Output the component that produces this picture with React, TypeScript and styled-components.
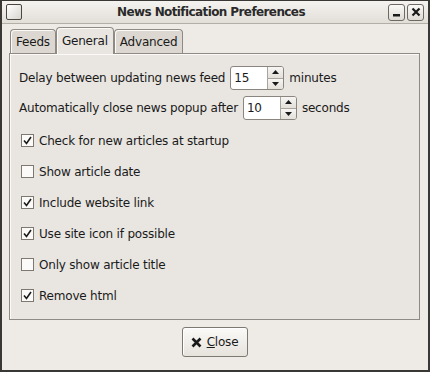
import React from 'react';
import styled, { createGlobalStyle } from 'styled-components';

const FONT = '"DejaVu Sans", "Liberation Sans", sans-serif';

const GlobalStyle = createGlobalStyle`
  html, body {
    margin: 0;
    padding: 0;
    background: #2b2b2b;
  }
  * {
    box-sizing: border-box;
  }
`;

const Window = styled.div`
  width: 430px;
  height: 372px;
  display: flex;
  flex-direction: column;
  background: #eeebe7;
  border: 2px solid #3a3835;
  border-top-width: 1px;
  font-family: ${FONT};
  font-size: 12px;
  letter-spacing: -0.2px;
  color: #1a1a1a;
`;

const TitleBar = styled.div`
  height: 23px;
  display: flex;
  align-items: center;
  padding: 0 4px 0 4px;
  background: linear-gradient(#f5f3f0, #e2ded8);
  border-bottom: 1px solid #b3aea6;
`;

const AppIcon = styled.div`
  width: 16px;
  height: 16px;
  border: 1px solid #4a4743;
  border-radius: 2px;
  background: linear-gradient(135deg, #ffffff, #d8d5d0);
`;

const Title = styled.div`
  flex: 1;
  text-align: center;
  font-weight: bold;
  font-size: 12px;
  letter-spacing: -0.6px;
  color: #2a2a2a;
  padding-left: 12px;
`;

const TitleButtons = styled.div`
  display: flex;
  gap: 2px;
`;

const TitleButton = styled.div`
  width: 17px;
  height: 17px;
  border: 1px solid #6d6963;
  border-radius: 3px;
  background: linear-gradient(#fbfaf8, #dedad4);
  display: flex;
  align-items: center;
  justify-content: center;
`;

const Body = styled.div`
  flex: 1;
  display: flex;
  flex-direction: column;
  padding: 4px 8px 0 7px;
`;

const Tabs = styled.div`
  display: flex;
  align-items: flex-end;
  height: 25px;
  padding-left: 1px;
`;

const Tab = styled.div<{ $active?: boolean }>`
  height: ${(p) => (p.$active ? '27px' : '24px')};
  padding: 0 5px;
  display: flex;
  align-items: center;
  border: 1px solid #8f8a83;
  border-bottom: none;
  border-radius: 4px 4px 0 0;
  background: ${(p) => (p.$active ? '#e9e6e1' : '#dcd8d1')};
  margin-bottom: ${(p) => (p.$active ? '-1px' : '0')};
  position: relative;
  z-index: ${(p) => (p.$active ? 1 : 0)};
  box-shadow: inset 1px 1px 0 #fbfaf8;
`;

const Panel = styled.div`
  height: 267px;
  display: flex;
  flex-direction: column;
  background: #e9e6e1;
  border: 1px solid #8f8a83;
  box-shadow: inset 1px 1px 0 #fbfaf8;
  padding: 12px 9px 0 9px;
`;

const SpinRow = styled.div`
  display: flex;
  align-items: center;
  height: 24px;
  gap: 5px;
  & + & {
    margin-top: 6px;
  }
`;

const SpinBox = styled.div<{ $width: number }>`
  width: ${(p) => p.$width}px;
  height: 24px;
  display: flex;
  border: 1px solid #8a857e;
  border-radius: 3px;
  background: #ffffff;
  overflow: hidden;
`;

const SpinValue = styled.div`
  flex: 1;
  display: flex;
  align-items: center;
  padding-left: 3px;
`;

const SpinArrows = styled.div`
  width: 16px;
  display: flex;
  flex-direction: column;
  border-left: 1px solid #a8a39b;
`;

const SpinArrow = styled.div`
  flex: 1;
  display: flex;
  align-items: center;
  justify-content: center;
  background: linear-gradient(#f7f6f4, #e3dfd9);
  & + & {
    border-top: 1px solid #a8a39b;
  }
`;

const CheckList = styled.div`
  display: flex;
  flex-direction: column;
  margin-top: 5px;
  padding-left: 2px;
`;

const CheckRow = styled.label`
  height: 31px;
  display: flex;
  align-items: center;
  gap: 5px;
`;

const Box = styled.span`
  width: 13px;
  height: 13px;
  border: 1px solid #7d7870;
  background: #fbfaf9;
  display: flex;
  align-items: center;
  justify-content: center;
`;

const ButtonRow = styled.div`
  display: flex;
  justify-content: center;
  padding-top: 7px;
`;

const Button = styled.div`
  width: 66px;
  height: 30px;
  display: flex;
  align-items: center;
  justify-content: center;
  gap: 5px;
  border: 1px solid #7d7870;
  border-radius: 3px;
  background: linear-gradient(#fbfaf8, #e6e2dc);
  box-shadow: inset 1px 1px 0 #ffffff;
`;

const Underline = styled.span`
  text-decoration: underline;
`;

const Spin = ({ value, width }: { value: string; width: number }) => (
  <SpinBox $width={width}>
    <SpinValue>{value}</SpinValue>
    <SpinArrows>
      <SpinArrow>
        <svg width="7" height="4" viewBox="0 0 7 4">
          <path d="M0 4 L3.5 0 L7 4 Z" fill="#1a1a1a" />
        </svg>
      </SpinArrow>
      <SpinArrow>
        <svg width="7" height="4" viewBox="0 0 7 4">
          <path d="M0 0 L3.5 4 L7 0 Z" fill="#1a1a1a" />
        </svg>
      </SpinArrow>
    </SpinArrows>
  </SpinBox>
);

const Check = ({ checked, label }: { checked?: boolean; label: string }) => (
  <CheckRow>
    <Box>
      {checked && (
        <svg width="9" height="9" viewBox="0 0 9 9">
          <path d="M1 4.5 L3.5 7.5 L8 1" stroke="#1a1a1a" strokeWidth="1.6" fill="none" />
        </svg>
      )}
    </Box>
    {label}
  </CheckRow>
);

const options = [
  { label: 'Check for new articles at startup', checked: true },
  { label: 'Show article date', checked: false },
  { label: 'Include website link', checked: true },
  { label: 'Use site icon if possible', checked: true },
  { label: 'Only show article title', checked: false },
  { label: 'Remove html', checked: true },
];

export default function App() {
  return (
    <>
      <GlobalStyle />
      <Window>
        <TitleBar>
          <AppIcon />
          <Title>News Notification Preferences</Title>
          <TitleButtons>
            <TitleButton>
              <svg width="9" height="9" viewBox="0 0 9 9">
                <rect x="1" y="6" width="7" height="2.5" fill="#1a1a1a" />
              </svg>
            </TitleButton>
            <TitleButton>
              <svg width="10" height="10" viewBox="0 0 10 10">
                <path d="M1.5 1.5 L8.5 8.5 M8.5 1.5 L1.5 8.5" stroke="#1a1a1a" strokeWidth="2.2" />
              </svg>
            </TitleButton>
          </TitleButtons>
        </TitleBar>
        <Body>
          <Tabs>
            <Tab>Feeds</Tab>
            <Tab $active>General</Tab>
            <Tab>Advanced</Tab>
          </Tabs>
          <Panel>
            <SpinRow>
              Delay between updating news feed
              <Spin value="15" width={54} />
              minutes
            </SpinRow>
            <SpinRow>
              Automatically close news popup after
              <Spin value="10" width={54} />
              seconds
            </SpinRow>
            <CheckList>
              {options.map((o) => (
                <Check key={o.label} label={o.label} checked={o.checked} />
              ))}
            </CheckList>
          </Panel>
          <ButtonRow>
            <Button>
              <svg width="11" height="11" viewBox="0 0 11 11">
                <path d="M1.5 1.5 L9.5 9.5 M9.5 1.5 L1.5 9.5" stroke="#1a1a1a" strokeWidth="2.6" />
              </svg>
              <span>
                <Underline>C</Underline>lose
              </span>
            </Button>
          </ButtonRow>
        </Body>
      </Window>
    </>
  );
}
